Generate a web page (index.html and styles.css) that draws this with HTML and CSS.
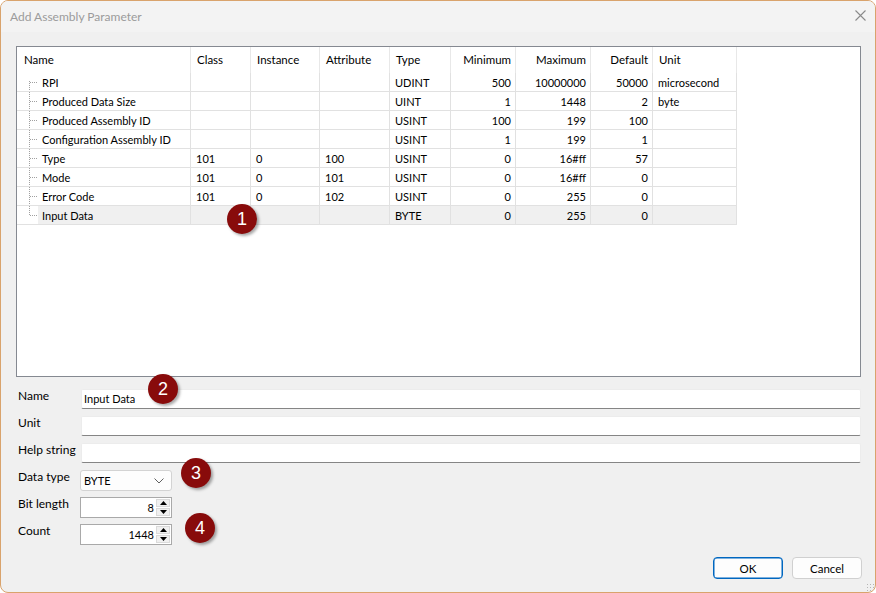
FILE: index.html
```html
<!DOCTYPE html>
<html lang="en">
<head>
    <meta charset="UTF-8">
    <title>Add Assembly Parameter</title>
    <link rel="stylesheet" href="styles.css">
</head>
<body>
    <div class="window">
        <div class="titlebar">
            <span class="title">Add Assembly Parameter</span>
            <svg class="close" width="11" height="11" viewBox="0 0 11 11">
                <path d="M0.5 0.5 L10.5 10.5 M10.5 0.5 L0.5 10.5" stroke="#8a8a8a" stroke-width="1.1" fill="none"/>
            </svg>
        </div>

        <div class="content">
            <div class="grid-box">
                <div class="grid">
                    <!-- header -->
                    <div class="hd">Name</div>
                    <div class="hd">Class</div>
                    <div class="hd">Instance</div>
                    <div class="hd">Attribute</div>
                    <div class="hd">Type</div>
                    <div class="hd num">Minimum</div>
                    <div class="hd num">Maximum</div>
                    <div class="hd num">Default</div>
                    <div class="hd">Unit</div>

                    <div class="cell name first">RPI</div>
                    <div class="cell"></div><div class="cell"></div><div class="cell"></div>
                    <div class="cell">UDINT</div>
                    <div class="cell num">500</div><div class="cell num">10000000</div><div class="cell num">50000</div>
                    <div class="cell">microsecond</div>

                    <div class="cell name">Produced Data Size</div>
                    <div class="cell"></div><div class="cell"></div><div class="cell"></div>
                    <div class="cell">UINT</div>
                    <div class="cell num">1</div><div class="cell num">1448</div><div class="cell num">2</div>
                    <div class="cell">byte</div>

                    <div class="cell name">Produced Assembly ID</div>
                    <div class="cell"></div><div class="cell"></div><div class="cell"></div>
                    <div class="cell">USINT</div>
                    <div class="cell num">100</div><div class="cell num">199</div><div class="cell num">100</div>
                    <div class="cell"></div>

                    <div class="cell name">Configuration Assembly ID</div>
                    <div class="cell"></div><div class="cell"></div><div class="cell"></div>
                    <div class="cell">USINT</div>
                    <div class="cell num">1</div><div class="cell num">199</div><div class="cell num">1</div>
                    <div class="cell"></div>

                    <div class="cell name">Type</div>
                    <div class="cell">101</div><div class="cell">0</div><div class="cell">100</div>
                    <div class="cell">USINT</div>
                    <div class="cell num">0</div><div class="cell num">16#ff</div><div class="cell num">57</div>
                    <div class="cell"></div>

                    <div class="cell name">Mode</div>
                    <div class="cell">101</div><div class="cell">0</div><div class="cell">101</div>
                    <div class="cell">USINT</div>
                    <div class="cell num">0</div><div class="cell num">16#ff</div><div class="cell num">0</div>
                    <div class="cell"></div>

                    <div class="cell name">Error Code</div>
                    <div class="cell">101</div><div class="cell">0</div><div class="cell">102</div>
                    <div class="cell">USINT</div>
                    <div class="cell num">0</div><div class="cell num">255</div><div class="cell num">0</div>
                    <div class="cell"></div>

                    <div class="cell name last sel">Input Data</div>
                    <div class="cell sel"></div><div class="cell sel"></div><div class="cell sel"></div>
                    <div class="cell sel">BYTE</div>
                    <div class="cell num sel">0</div><div class="cell num sel">255</div><div class="cell num sel">0</div>
                    <div class="cell sel"></div>
                </div>
            </div>

            <div class="form">
                <div class="form-row">
                    <span class="label">Name</span>
                    <div class="field">Input Data</div>
                </div>
                <div class="form-row">
                    <span class="label">Unit</span>
                    <div class="field"></div>
                </div>
                <div class="form-row">
                    <span class="label">Help string</span>
                    <div class="field"></div>
                </div>
                <div class="form-row">
                    <span class="label">Data type</span>
                    <div class="select">
                        <span>BYTE</span>
                        <svg width="10" height="6" viewBox="0 0 10 6"><path d="M0.5 0.5 L5 5 L9.5 0.5" stroke="#606060" fill="none"/></svg>
                    </div>
                </div>
                <div class="form-row">
                    <span class="label">Bit length</span>
                    <div class="spin">
                        <span class="spin-value">8</span>
                        <div class="spin-btns">
                            <div class="spin-btn"><svg width="7" height="4" viewBox="0 0 7 4"><path d="M0 4 L3.5 0 L7 4 Z" fill="#000"/></svg></div>
                            <div class="spin-btn"><svg width="7" height="4" viewBox="0 0 7 4"><path d="M0 0 L3.5 4 L7 0 Z" fill="#000"/></svg></div>
                        </div>
                    </div>
                </div>
                <div class="form-row">
                    <span class="label">Count</span>
                    <div class="spin">
                        <span class="spin-value">1448</span>
                        <div class="spin-btns">
                            <div class="spin-btn"><svg width="7" height="4" viewBox="0 0 7 4"><path d="M0 4 L3.5 0 L7 4 Z" fill="#000"/></svg></div>
                            <div class="spin-btn"><svg width="7" height="4" viewBox="0 0 7 4"><path d="M0 0 L3.5 4 L7 0 Z" fill="#000"/></svg></div>
                        </div>
                    </div>
                </div>
            </div>

            <div class="buttons">
                <button class="btn btn-ok">OK</button>
                <button class="btn">Cancel</button>
            </div>
        </div>

        <!-- annotation markers -->
        <span class="badge badge-1">1</span>
        <span class="badge badge-2">2</span>
        <span class="badge badge-3">3</span>
        <span class="badge badge-4">4</span>
        <span class="grip"></span>
    </div>
</body>
</html>
```

FILE: styles.css
```css
* {
    box-sizing: border-box;
}

body {
    margin: 0;
    font-family: 'Lato', 'Liberation Sans', sans-serif;
    font-size: 11.5px;
    color: #000;
    background: #fff;
}

.window {
    position: relative;
    width: 876px;
    height: 593px;
    border: 1px solid #d9a36c;
    border-radius: 8px;
    background: #f0f0f0;
    overflow: hidden;
}

.titlebar {
    display: flex;
    align-items: center;
    justify-content: space-between;
    height: 31px;
    padding: 0 9px 0 9px;
    background: #f3f3f3;
}

.title {
    color: #9b9b9b;
    font-size: 12px;
}

.close {
    margin-top: -2px;
}

.content {
    padding: 14px 14px 0 15px;
}

/* property grid */
.grid-box {
    height: 331px;
    border: 1px solid #858991;
    background: #fff;
}

.grid {
    display: grid;
    grid-template-columns: 174px 60px 69px 70px 61px 65px 75px 62px 84px;
    grid-template-rows: 26px;
    grid-auto-rows: 19px;
    width: 720px;
    font-size: 11px;
}

.hd {
    height: 26px;
    padding: 1px 6px 0;
    line-height: 24px;
    font-size: 11.5px;
    border-right: 1px solid #e8e8e8;
    white-space: nowrap;
}

.hd:first-child {
    padding-left: 7px;
}

.grid .num {
    text-align: right;
    padding-right: 4px;
}

.cell {
    height: 19px;
    padding-top: 2px;
    line-height: 16px;
    padding-left: 5px;
    padding-right: 5px;
    border-right: 1px solid #e1e1e1;
    border-bottom: 1px solid #e1e1e1;
    white-space: nowrap;
    overflow: hidden;
}

.cell.sel {
    background: #f0f0f0;
}

.cell.name {
    position: relative;
    padding-left: 25px;
    border-right: 1px solid #e1e1e1;
}

.cell.name.sel {
    background: linear-gradient(to right, #fff 21px, #f0f0f0 21px);
}

/* tree connector lines */
.cell.name::before {
    content: '';
    position: absolute;
    left: 13px;
    top: 9px;
    width: 7px;
    border-top: 1px dotted #a0a0a0;
}

.cell.name::after {
    content: '';
    position: absolute;
    left: 12px;
    top: 0;
    bottom: -1px;
    border-left: 1px dotted #a0a0a0;
}

.cell.name.first::after {
    top: 8px;
}

.cell.name.last::after {
    bottom: 9px;
}

/* form */
.form {
    margin-top: 12px;
    display: flex;
    flex-direction: column;
    gap: 7px;
}

.form-row {
    display: flex;
    align-items: flex-start;
    height: 20px;
}

.label {
    width: 65px;
    padding-left: 2px;
    line-height: 14px;
    font-size: 12px;
    flex-shrink: 0;
}

.field {
    flex: 1;
    height: 20px;
    line-height: 18px;
    padding: 0 2px;
    font-size: 11px;
    background: #fff;
    border: 1px solid #ececec;
    border-bottom-color: #858585;
    border-radius: 2px;
}

.select {
    display: flex;
    align-items: center;
    justify-content: space-between;
    width: 92px;
    height: 21px;
    margin-left: -1px;
    padding: 0 7px 0 3px;
    font-size: 11px;
    background: #fdfdfd;
    border: 1px solid #d3d3d3;
    border-radius: 3px;
}

.spin {
    display: flex;
    align-items: center;
    width: 92px;
    height: 21px;
    margin-left: -1px;
    padding: 1px 1px 1px 2px;
    font-size: 11px;
    background: #fff;
    border: 1px solid #a9a9a9;
}

.spin-value {
    flex: 1;
    text-align: right;
    padding-right: 2px;
}

.spin-btns {
    display: flex;
    flex-direction: column;
    gap: 1px;
    width: 14px;
    height: 17px;
}

.spin-btn {
    flex: 1;
    display: flex;
    align-items: center;
    justify-content: center;
    background: #f0f0f0;
    border: 1px solid #dadada;
}

.buttons {
    display: flex;
    justify-content: flex-end;
    gap: 9px;
    margin-top: 13px;
    margin-right: -1px;
}

.btn {
    width: 70px;
    height: 22px;
    font-family: inherit;
    font-size: 11.5px;
    color: #000;
    background: #fdfdfd;
    border: 1px solid #d0d0d0;
    border-radius: 4px;
}

.btn-ok {
    border: 1px solid #0067c0;
    box-shadow: inset 0 0 0 0.5px #0067c0;
}

/* numbered annotation markers */
.badge {
    position: absolute;
    width: 30px;
    height: 30px;
    line-height: 30px;
    border-radius: 50%;
    background: #880b0b;
    color: #fff;
    font-family: 'Liberation Sans', sans-serif;
    font-size: 18px;
    text-align: center;
    box-shadow: 2px 2px 3px rgba(0, 0, 0, 0.35);
}

.badge-1 { left: 226px; top: 203px; }
.badge-2 { left: 147px; top: 373px; }
.badge-3 { left: 180px; top: 457px; }
.badge-4 { left: 184px; top: 512px; }

.grip {
    position: absolute;
    right: 1px;
    bottom: 1px;
    width: 8px;
    height: 8px;
    background: radial-gradient(circle, #b5b5b5 0.8px, transparent 1px) 0 0 / 3px 3px;
}
```
